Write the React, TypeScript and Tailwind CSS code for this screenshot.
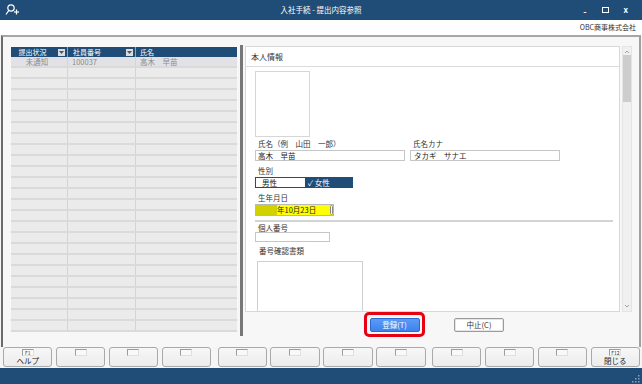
import React from "react";

const BLUE = "bg-[#1f4d78]";

const FKeys: { key?: string; label?: string }[][] = [
    [{ key: "F1", label: "ヘルプ" }, {}, {}, {}],
    [{}, {}, {}, {}],
    [{}, {}, {}, { key: "F12", label: "閉じる" }],
];

const TitleBar = () => (
    <div className={`h-[20px] ${BLUE} grid grid-cols-[1fr_auto_1fr] items-center text-white`}>
        <div className="pl-[4px] flex items-center">
            <svg width="16" height="14" viewBox="0 0 16 14" fill="none" stroke="#ffffff" strokeWidth="1.2">
                <circle cx="7" cy="5" r="3.2" />
                <line x1="4.8" y1="7.4" x2="2" y2="11.5" />
                <line x1="10" y1="9" x2="15" y2="9" />
                <line x1="12.5" y1="6.5" x2="12.5" y2="11.5" />
            </svg>
        </div>
        <div className="text-[7.5px] leading-none">入社手続 - 提出内容参照</div>
        <div className="flex justify-end items-center pr-[14px] gap-[15px] text-[9px] font-bold">
            <span className="leading-none mt-[2px]">-</span>
            <span className="w-[7px] h-[6px] border-[1.5px] border-white" />
            <span className="leading-none text-[8px]">x</span>
        </div>
    </div>
);

const DropBox = () => (
    <span className="w-[7px] h-[7px] mr-[2px] bg-[#dcdcdc] flex items-center justify-center">
        <svg width="5" height="3" viewBox="0 0 5 3">
            <polygon points="0,0 5,0 2.5,3" fill="#555" />
        </svg>
    </span>
);

const LeftTable = () => {
    const rows = Array.from({ length: 25 }, (_, i) => i);
    return (
        <div className="w-[226px] leading-none">
            <div className={`h-[10px] ${BLUE} flex text-white text-[7px]`}>
                <div className="w-[57px] flex items-center border-r border-[#8aa3bb]">
                    <span className="flex-1 text-center pr-[4px]">提出状況</span>
                    <DropBox />
                </div>
                <div className="w-[68px] flex items-center border-r border-[#8aa3bb]">
                    <span className="flex-1 pl-[5px]">社員番号</span>
                    <DropBox />
                </div>
                <div className="flex-1 flex items-center pl-[4px]">氏名</div>
            </div>
            {rows.map((i) => (
                <div
                    key={i}
                    className={`h-[11px] flex border-b-2 border-[#dadada] text-[7.5px] ${i === 0 ? "bg-[#e1e1e6]" : "bg-[#ebebeb]"} text-[#8c8c8c]`}>
                    <div className="w-[57px] border-r border-[#d4d4d4] flex items-center justify-center pr-[4px]">
                        {i === 0 ? "未通知" : ""}
                    </div>
                    <div className="w-[68px] border-r border-[#d4d4d4] flex items-center pl-[4px]">
                        {i === 0 ? "100037" : ""}
                    </div>
                    <div className="flex-1 flex items-center pl-[4px]">{i === 0 ? "高木　早苗" : ""}</div>
                </div>
            ))}
        </div>
    );
};

const Label = ({ children, className = "" }: { children: React.ReactNode; className?: string }) => (
    <div className={`text-[7.5px] text-[#333] pl-[3px] ${className}`}>{children}</div>
);

const Card = () => (
    <div className="w-[375px] h-[266px] bg-white border border-[#d8d8d8] overflow-hidden">
        <div className="h-[20px] border-b border-[#dcdcdc] flex items-center pl-[5px] text-[8px] text-[#333]">
            本人情報
        </div>
        <div className="pl-[9px]">
            <div className="mt-[4px] w-[55px] h-[66px] border border-[#d6d6d6]" />
            <div className="flex gap-[5px]">
                <div>
                    <Label className="h-[13px] leading-[14px]">氏名（例　山田　一郎）</Label>
                    <div className="w-[150px] h-[11px] border border-[#c6c6c6] text-[7.5px] leading-[9px] pl-[2px] text-[#222]">
                        高木　早苗
                    </div>
                </div>
                <div>
                    <Label className="h-[13px] leading-[14px]">氏名カナ</Label>
                    <div className="w-[150px] h-[11px] border border-[#c6c6c6] text-[7.5px] leading-[9px] pl-[3px] text-[#222]">
                        タカギ　サナエ
                    </div>
                </div>
            </div>
            <Label className="mt-[4px] h-[12px] leading-[12px]">性別</Label>
            <div className="flex w-[98px] h-[11px] border border-[#1f4d78] text-[7.5px] leading-[9px]">
                <div className="w-[49px] bg-white text-[#222] pl-[6px]">男性</div>
                <div className={`flex-1 ${BLUE} text-white pl-[3px]`}>✓ 女性</div>
            </div>
            <Label className="mt-[4px] h-[12px] leading-[12px]">生年月日</Label>
            <div className="flex items-center w-[79px] h-[12px] bg-[#ffff00] border border-[#b8b8b8] text-[7.5px] text-[#222]">
                <div className="w-[21px] h-full bg-[#d2d200]" />
                <div className="flex-1 leading-none">年10月23日</div>
                <div className="w-[3px] h-[10px] border border-[#888] rounded-[2px] bg-white" />
            </div>
            <div className="mt-[4px] w-[358px] h-[2px] bg-[#d4d4d4]" />
            <Label className="h-[10px] leading-[11px]">個人番号</Label>
            <div className="w-[75px] h-[10px] border border-[#c6c6c6]" />
            <Label className="mt-[4px] h-[10px] leading-[10px] pl-[4px]">番号確認書類</Label>
            <div className="mt-[5px] ml-[2px] w-[106px] h-[70px] border border-[#d0d0d0]" />
        </div>
    </div>
);

const ScrollBar = () => (
    <div className="w-[10px] h-[266px] bg-[#f0f0f0] border border-[#e4e4e4] flex flex-col items-center">
        <svg width="6" height="6" viewBox="0 0 6 6" className="mt-[2px]">
            <polyline points="1,4 3,2 5,4" fill="none" stroke="#999" strokeWidth="0.9" />
        </svg>
        <div className="w-[8px] h-[47px] bg-[#cdcdcd]" />
        <div className="flex-1" />
        <svg width="6" height="6" viewBox="0 0 6 6" className="mb-[2px]">
            <polyline points="1,2 3,4 5,2" fill="none" stroke="#999" strokeWidth="0.9" />
        </svg>
    </div>
);

const FKeyButton = ({ k, label }: { k?: string; label?: string }) => (
    <div className="flex-1 h-[20px] rounded-[3px] border border-[#a9a9a9] bg-gradient-to-b from-[#f7f7f7] to-[#ececec] flex flex-col items-center overflow-hidden">
        <div className="mt-[1px] min-w-[12px] h-[7px] border-t border-l border-[#9c9c9c] border-r border-b border-r-[#e0e0e0] border-b-[#e0e0e0] bg-[#f9f9f9] text-[5px] leading-[5px] text-center text-[#333] px-[1px]">
            {k ?? ""}
        </div>
        {label && <div className="text-[7.5px] leading-[9px] text-[#222]">{label}</div>}
    </div>
);

export default function App() {
    return (
        <div className="w-[642px] h-[384px] overflow-hidden flex flex-col bg-[#f5f5f5] font-['Noto_Sans_CJK_JP','Noto_Sans',sans-serif]">
            <TitleBar />
            <div className="h-[15px] bg-white flex items-center justify-end pr-[6px] text-[7px] text-[#333]">
                OBC商事株式会社
            </div>
            <div className="h-[312px] mx-[1px] flex border-t-2 border-t-[#a6a6a6] border-l-2 border-l-[#6b6b6b] border-r-2 border-r-[#a0a0a0] bg-[#f7f7f7]">
                <div className="w-[234px] pl-[8px] pt-[10px]">
                    <LeftTable />
                </div>
                <div className="ml-[3px] mt-[8px] w-[3px] h-[291px] bg-[#777777]" />
                <div className="ml-[2px] pt-[9px] flex flex-col">
                    <div className="flex gap-[2px]">
                        <Card />
                        <ScrollBar />
                    </div>
                    <div className="h-[25px] flex items-center pl-[119px]">
                        <div className="w-[61px] h-[25px] border-[3px] border-[#e60012] rounded-[5px] flex items-center justify-center">
                            <div className="w-[50px] h-[14px] rounded-[2px] border border-[#2d6ad0] bg-gradient-to-b from-[#5c9af5] to-[#3f82ee] text-white text-[7.5px] flex items-center justify-center">
                                登録(T)
                            </div>
                        </div>
                        <div className="ml-[29px] w-[50px] h-[14px] rounded-[2px] border border-[#9a9a9a] bg-white text-[#333] text-[7.5px] flex items-center justify-center shadow-[inset_0_0_0_1px_#e6e6e6]">
                            中止(C)
                        </div>
                    </div>
                </div>
            </div>
            <div className="h-[21px] flex pl-[3px] pr-[2px] gap-[6.5px]">
                {FKeys.map((group, gi) => (
                    <div key={gi} className="flex-1 flex gap-[3.5px]">
                        {group.map((b, bi) => (
                            <FKeyButton key={bi} k={b.key} label={b.label} />
                        ))}
                    </div>
                ))}
            </div>
            <div className={`h-[16px] ${BLUE} flex justify-end items-end pr-[2px] pb-[1px]`}>
                <svg width="8" height="8" viewBox="0 0 8 8">
                    <rect x="6" y="0" width="1.5" height="1.5" fill="#8aa0b8" />
                    <rect x="3" y="3" width="1.5" height="1.5" fill="#8aa0b8" />
                    <rect x="6" y="3" width="1.5" height="1.5" fill="#8aa0b8" />
                    <rect x="0" y="6" width="1.5" height="1.5" fill="#8aa0b8" />
                    <rect x="3" y="6" width="1.5" height="1.5" fill="#8aa0b8" />
                    <rect x="6" y="6" width="1.5" height="1.5" fill="#8aa0b8" />
                </svg>
            </div>
        </div>
    );
}
